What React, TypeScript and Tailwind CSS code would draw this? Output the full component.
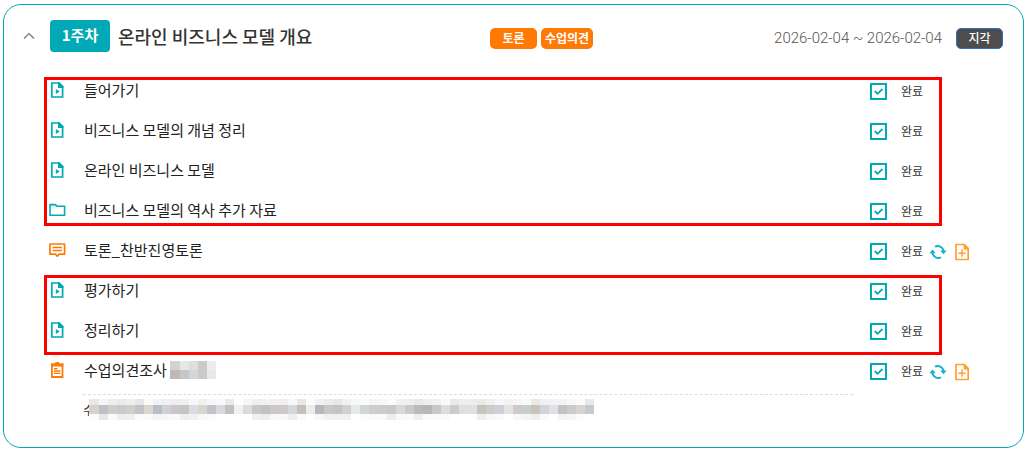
type IconType = "video" | "folder" | "debate" | "survey";

type Lesson = {
  title: string;
  icon: IconType;
  actions?: boolean;
  masked?: boolean;
};

const firstLessons: Lesson[] = [
  { title: "들어가기", icon: "video" },
  { title: "비즈니스 모델의 개념 정리", icon: "video" },
  { title: "온라인 비즈니스 모델", icon: "video" },
  { title: "비즈니스 모델의 역사 추가 자료", icon: "folder" },
];

const lastLessons: Lesson[] = [
  { title: "평가하기", icon: "video" },
  { title: "정리하기", icon: "video" },
];

const nameMask = [
  ["#d6d1cd", "#e3e8e8", "#dcdee1", "#cdcac8", "#ebedee"],
  ["#bfb9b6", "#c3c7c8", "#d3d5d8", "#cccac9", "#e6e8eb"],
];

// top, middle and bottom colour of each block
const noteMask = [
  "#e9e8e6 #d5d3d1 #fbfbfb", "#f5f5f5 #bfc1c7 #e6e8e8", "#eeeeee #cfcfc8 #fafafa", "#ebeaea #cdc9ca #efefef",
  "#efefef #d0cecb #efefef", "#e5e7ea #c3c4c7 #fbfbfb", "#fdfbf5 #d9d8cf #fafafa", "#f0f2f3 #b9bdc6 #f3f4f5",
  "#eff0f0 #cfd2d4 #f7f7f7", "#eeeded #cbc7c8 #f9f9f9", "#efefef #c3c5c7 #eeeeee", "#f6f8f9 #dadce1 #f0f1f2",
  "#f0f1ef #d7d5cc #f9f9f9", "#f6f8f8 #c2c4cb #fbfbfb", "#fafafa #d8d8dd #ffffff", "#e7eaea #c1c1c1 #ffffff",
  "#ffffff #f0f1f3 #ffffff", "#f5f6f6 #dbdcd9 #ffffff", "#eeeeee #c9c7c5 #f0f0f0", "#f1f3f3 #c0c2c6 #ededef",
  "#f2f0f0 #cbc7ca #f9f9f9", "#f0efef #ccc9c8 #f8f8f8", "#f7f8f9 #d5d7da #eeeff0", "#e9e8e6 #c5c0bd #fafafa",
  "#fafdfc #e9edec #ffffff", "#f0f1f1 #b7b8bd #f8f8f8", "#ebedec #c9c8c6 #f1f1f1", "#e7e8e7 #c5c4c2 #f1f1f1",
  "#f0f2f2 #ced1d2 #f1f1f1", "#f6f9f8 #e7e8e8 #ffffff", "#fafbfb #d3d5d8 #fbfbfb", "#f3f5f4 #cfcccb #fafafa",
  "#f6f7f6 #cdcac8 #fafafa", "#fbfbfb #c7c9cd #ededed", "#f0f2f1 #dad7d6 #f9f9f9", "#eeefef #c9c9ce #fafafa",
  "#e8eaea #b9babd #efefef", "#edefef #b8b5b6 #fafafa", "#f0f1f1 #c8c8c9 #fafafa", "#fafafa #dcdddf #fafafa",
  "#eaebe9 #cdccc8 #ffffff", "#ecefee #dfdfe0 #ffffff", "#eceeed #e0e1e0 #fdfdfd", "#ebeae7 #c7c4c0 #eeeeee",
  "#f0f0ef #cccdcb #f7f7f7", "#f6f7f8 #cfd1d6 #fafafa", "#f2f4f4 #e3e3e4 #ffffff", "#f5f5f5 #cfc9c9 #f8f8f8",
  "#f9fbfa #c8cdcd #f3f4f4", "#e9e9e7 #c9c3bc #eeeeee", "#eff0f1 #d1d4db #f9f9f9", "#f1f2f3 #e1e1e4 #ffffff",
  "#f3f3f3 #c2c2c2 #f3f3f3", "#f7f8f7 #cfcaca #f6f6f6", "#fbfcfb #dad4d0 #fcfcfc", "#e5e9ec #c5cacd #ffffff",
];

function LessonIcon({ type }: { type: IconType }) {
  if (type === "video")
    return (
      <svg width="15" height="16" viewBox="0 0 15 16" fill="none" className="text-[#00a9b5]">
        <path d="M1.8 1H8.8L12.6 4.6V15H1.8z" stroke="currentColor" strokeWidth="1.7" />
        <path d="M8 0h1.2l4.2 4.2V6H8z" fill="currentColor" />
        <path d="M5.8 6.9v5L9.6 9.4z" fill="currentColor" />
      </svg>
    );
  if (type === "folder")
    return (
      <svg width="17" height="14" viewBox="0 0 17 14" fill="none" className="text-[#00a9b5]">
        <path d="M1 1.5H6.2L8 3.2H15.6V12.3H1z" stroke="currentColor" strokeWidth="1.6" strokeLinejoin="round" />
        <path d="M1 1h5.3l2 2.6H1z" fill="currentColor" opacity="0.35" />
      </svg>
    );
  if (type === "debate")
    return (
      <svg width="17" height="15" viewBox="0 0 17 15" fill="none" className="text-[#ff7a05]">
        <path d="M1 1H15.6V11.2H10.2L8.3 13.2L6.4 11.2H1z" stroke="currentColor" strokeWidth="1.7" strokeLinejoin="round" />
        <path d="M3.6 4.6h9.4M3.6 7.6h9.4" stroke="currentColor" strokeWidth="1.5" />
      </svg>
    );
  return (
    <svg width="15" height="16" viewBox="0 0 15 16" fill="none" className="text-[#ff7a05]">
      <path d="M1.9 2.5H12.5V15H1.9z" stroke="currentColor" strokeWidth="1.8" />
      <path d="M1 1.6h3.8L5.6 0h3.2l.8 1.6h3.8V4.6H1z" fill="currentColor" />
      <path d="M4 6.8h3.4M4 9h6.4M4 11.4h6.4" stroke="currentColor" strokeWidth="1.4" />
    </svg>
  );
}

function RefreshIcon() {
  return (
    <svg width="18" height="16" viewBox="0 0 18 16" fill="none">
      <path d="M6 2.6A6 6 0 0 1 14.6 7.5M12 13.4A6 6 0 0 1 3.4 8.5" stroke="#10b1c8" strokeWidth="1.9" />
      <path d="M11.3 6.6H17.6L14.5 10.2zM0.4 9.2H6.7L3.5 5.4z" fill="#10b1c8" />
    </svg>
  );
}

function FilePlusIcon() {
  return (
    <svg width="15" height="18" viewBox="0 0 15 18" fill="none">
      <path d="M1 1.5H9.2L13.2 5.6V16.5H1z" stroke="#ffa033" strokeWidth="1.7" strokeLinejoin="round" />
      <path d="M8.6 1h1.2l4 4.2v1.3H8.6z" fill="#ffa033" />
      <path d="M7 6.6v7.2M3.4 10.2h7.2" stroke="#ffa033" strokeWidth="1.6" />
    </svg>
  );
}

function NameMask() {
  return (
    <svg width="46" height="18" shapeRendering="crispEdges" className="ml-[3px] shrink-0">
      {nameMask.map((row, y) =>
        row.map((fill, x) => (
          <rect key={`${x}-${y}`} x={x ? x * 9 + 1 : 0} y={y * 9} width={x ? 9 : 10} height="9" fill={fill} />
        ))
      )}
    </svg>
  );
}

function NoteMask() {
  return (
    <svg width="505" height="21" shapeRendering="crispEdges" className="relative -ml-[5px] shrink-0">
      {noteMask.map((block, i) => {
        const [top, middle, bottom] = block.split(" ");
        const x = i ? i * 9 + 1 : 0;
        const width = i ? 9 : 10;
        return (
          <g key={i}>
            <rect x={x} y="0" width={width} height="6" fill={top} />
            <rect x={x} y="6" width={width} height="9" fill={middle} />
            <rect x={x} y="15" width={width} height="6" fill={bottom} />
          </g>
        );
      })}
    </svg>
  );
}

function LessonRow({ lesson }: { lesson: Lesson }) {
  return (
    <li className="flex h-10 items-center">
      <span className="flex w-[17px] shrink-0 justify-center">
        <LessonIcon type={lesson.icon} />
      </span>
      <div className="ml-[18px] flex min-w-0 flex-1 items-center">
        <a href="#" className="truncate text-[15px] leading-6 text-[#222]">{lesson.title}</a>
        {lesson.masked && <NameMask />}
      </div>
      <div className="flex w-[134px] shrink-0 items-center pt-0.5">
        <label className="flex items-center gap-3.5 text-xs text-[#333]">
          <span className="relative block size-[17px]">
            <input type="checkbox" defaultChecked className="block size-[17px] appearance-none border-2 border-[#00a9b5] bg-white" />
            <svg width="17" height="17" viewBox="0 0 17 17" fill="none" className="pointer-events-none absolute inset-0">
              <path d="M4.8 8L7.6 10.8L12.4 6" stroke="#00a9b5" strokeWidth="1.8" />
            </svg>
          </span>
          완료
        </label>
        {lesson.actions && (
          <div className="ml-1.5 flex items-center gap-2 pt-0.5">
            <button type="button" aria-label="새로고침"><RefreshIcon /></button>
            <button type="button" aria-label="파일 추가"><FilePlusIcon /></button>
          </div>
        )}
      </div>
    </li>
  );
}

function App() {
  return (
    <div className="bg-white px-[3px] py-1 font-['Noto_Sans_CJK_KR','Noto_Sans',sans-serif]">
      <section className="rounded-[18px] border border-[#00a9b5] pb-[27px]">
        <header className="flex items-center pr-[20px] pl-[18px] pt-[15px]">
          <button type="button" aria-label="접기" className="flex w-3.5 justify-center">
            <svg width="12" height="8" viewBox="0 0 12 8" fill="none">
              <path d="M1 6.5L6 1.5L11 6.5" stroke="#777" strokeWidth="1.2" />
            </svg>
          </button>
          <span className="ml-3.5 flex h-8 w-[60px] shrink-0 items-center justify-center rounded bg-[#00a9b5] pb-0.5 text-[15px] font-bold text-white">
            1주차
          </span>
          <h2 className="ml-2 min-w-0 flex-1 truncate text-lg font-medium text-[#333]">온라인 비즈니스 모델 개요</h2>
          <div className="flex w-[513px] shrink-0 items-center pt-1">
            <button type="button" className="h-[21px] w-[47px] rounded-[5px] bg-[#ff7a05] text-xs font-bold text-white">토론</button>
            <button type="button" className="ml-1 h-[21px] w-[52px] rounded-[5px] bg-[#ff7a05] text-xs font-bold text-white">수업의견</button>
            <span className="ml-auto font-[Roboto,sans-serif] text-[15px] font-light text-[#555]">2026-02-04 ~ 2026-02-04</span>
            <button type="button" className="ml-3.5 h-[21px] w-[47px] rounded-[5px] border border-[#2f6fc4] bg-[#4d4d4d] text-xs leading-none font-medium text-white">
              지각
            </button>
          </div>
        </header>

        <div className="mt-[18px] pr-[19px] pl-[45px]">
          <div className="relative">
            <ul>
              {firstLessons.map((lesson) => <LessonRow key={lesson.title} lesson={lesson} />)}
            </ul>
            <div className="pointer-events-none absolute top-[7px] right-[62px] bottom-1 -left-[5px] border-3 border-[#fe0000]" />
          </div>
          <ul>
            <LessonRow lesson={{ title: "토론_찬반진영토론", icon: "debate", actions: true }} />
          </ul>
          <div className="relative">
            <ul>
              {lastLessons.map((lesson) => <LessonRow key={lesson.title} lesson={lesson} />)}
            </ul>
            <div className="pointer-events-none absolute top-[5px] right-[62px] -bottom-[5px] -left-[5px] border-3 border-[#fe0000]" />
          </div>
          <ul>
            <LessonRow lesson={{ title: "수업의견조사", icon: "survey", actions: true, masked: true }} />
          </ul>
          <div className="mt-1 mr-[151px] ml-[34px] flex items-center border-t border-dashed border-[#ddd] pt-1 text-xs text-[#333]">
            <span>수</span>
            <NoteMask />
          </div>
        </div>
      </section>
    </div>
  );
}

export default App;
